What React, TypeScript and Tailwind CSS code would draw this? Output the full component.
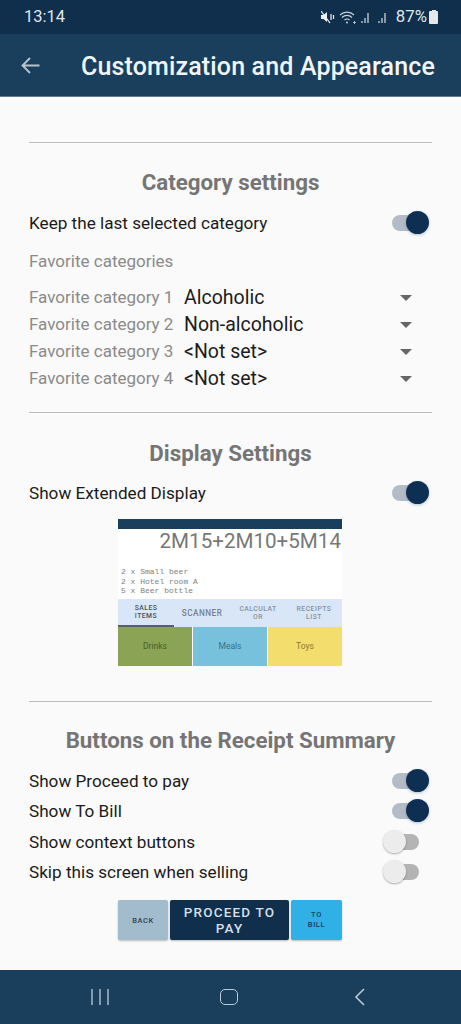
const favorites = [
  { label: 'Favorite category 1', value: 'Alcoholic' },
  { label: 'Favorite category 2', value: 'Non-alcoholic' },
  { label: 'Favorite category 3', value: '<Not set>' },
  { label: 'Favorite category 4', value: '<Not set>' },
];

function Toggle({ on }: { on: boolean }) {
  if (on) {
    return (
      <div className="relative h-[16px] w-[36px]">
        <div className="absolute left-0 top-0 h-[16px] w-[30px] rounded-full bg-[#b3bcc6]" />
        <div className="absolute right-[-1px] top-[-4px] h-[23px] w-[23px] rounded-full bg-[#0f2f52] shadow-[0_1px_3px_rgba(60,110,160,0.4)]" />
      </div>
    );
  }
  return (
    <div className="relative h-[16px] w-[36px]">
      <div className="absolute left-0 top-0 h-[16px] w-[27px] rounded-full bg-[#b4b4b4]" />
      <div className="absolute left-[-9px] top-[-4px] h-[23px] w-[23px] rounded-full bg-[#ececec] shadow-[0_1px_2px_rgba(0,0,0,0.3)]" />
    </div>
  );
}

function SectionTitle({ children }: { children: string }) {
  return <h2 className="text-center text-[22.3px] font-bold leading-[28px] text-[#757575]">{children}</h2>;
}

function ToggleRow({ label, on, className }: { label: string; on: boolean; className?: string }) {
  return (
    <div className={`flex items-center justify-between pr-[4px] ${className ?? ''}`}>
      <span className="text-[17.15px] leading-[22px] text-[#1a1a1a]">{label}</span>
      <Toggle on={on} />
    </div>
  );
}

function DisplayPreview() {
  return (
    <div className="ml-[89px] mt-[15px] w-[224px] overflow-hidden bg-white">
      <div className="h-[10px] bg-[#1a3f5c]" />
      <div className="pr-[1px] text-right text-[20.6px] leading-[24px] text-[#777777]">2M15+2M10+5M14</div>
      <div className="mt-[14px] pl-[3px] font-['Liberation_Mono'] text-[8px] leading-[9.6px] text-[#808080]">
        <div>2 x Small beer</div>
        <div>2 x Hotel room A</div>
        <div>5 x Beer bottle</div>
      </div>
      <div className="mt-[3px] grid h-[28px] grid-cols-4 bg-[#d9e6f7] text-center text-[6.8px] font-medium leading-[8px] tracking-[0.5px]">
        <div className="flex items-center justify-center border-b-2 border-[#555f66] text-[#465260]">SALES<br />ITEMS</div>
        <div className="flex items-center justify-center text-[8.2px] text-[#76828d]">SCANNER</div>
        <div className="flex items-center justify-center text-[#87929d]">CALCULAT<br />OR</div>
        <div className="flex items-center justify-center text-[#87929d]">RECEIPTS<br />LIST</div>
      </div>
      <div className="grid h-[39px] grid-cols-3 gap-[1px] text-center text-[8.5px] leading-[39px]">
        <div className="border-b-2 border-[#c5d0aa] bg-[#8aa355] text-[#46602a]">Drinks</div>
        <div className="border-b-2 border-[#a9c7e8] bg-[#78c1dd] text-[#357089]">Meals</div>
        <div className="border-b-2 border-[#e8c9a0] bg-[#f3dd6c] text-[#8a7b34]">Toys</div>
      </div>
    </div>
  );
}

function ReceiptButtons() {
  return (
    <div className="ml-[89px] mt-[17px] flex h-[40px] w-[224px] gap-[2px] font-medium">
      <div className="flex w-[50px] items-center justify-center rounded-[2px] bg-[#a3bccd] text-[7.5px] tracking-[0.6px] text-[#33424f] shadow-[0_1px_2px_rgba(0,0,0,0.25)]">
        BACK
      </div>
      <div className="flex flex-1 items-center justify-center rounded-[2px] bg-[#0f2f4d] text-center text-[13.5px] leading-[16px] tracking-[1.2px] text-[#d8dfe5] shadow-[0_1px_2px_rgba(0,0,0,0.25)]">
        PROCEED TO<br />PAY
      </div>
      <div className="flex w-[51px] items-center justify-center rounded-[2px] bg-[#2fb0e6] text-center text-[7.5px] leading-[10px] tracking-[0.6px] text-[#123f5c] shadow-[0_1px_2px_rgba(0,0,0,0.25)]">
        TO<br />BILL
      </div>
    </div>
  );
}

function StatusIcons() {
  return (
    <svg width="72" height="16" viewBox="0 0 72 16" fill="none" aria-hidden="true">
      {/* muted speaker */}
      <path d="M0 6h2.500L6 3v10L2.500 10H0Z" fill="#eef2f5" />
      <path d="M0 2l9 12" stroke="#eef2f5" strokeWidth="1.200" />
      <path d="M10 5v6M12.500 6v4" stroke="#eef2f5" strokeWidth="1.200" />
      {/* wifi */}
      <path d="M19 6a10 10 0 0 1 14 0M21 8.500a7 7 0 0 1 10 0M23.500 11a3.500 3.500 0 0 1 5 0" stroke="#c9d3db" strokeWidth="1.100" />
      <circle cx="26" cy="13.500" r="1" fill="#c9d3db" />
      <path d="M32 13.500h3M33.500 12v3" stroke="#c9d3db" strokeWidth="0.800" />
      {/* signal bars */}
      <path d="M41 14v-2M44 14V9M47 14V4" stroke="#c9d3db" strokeWidth="1.300" />
      <path d="M58 14v-2M61 14V9M64 14V4" stroke="#c9d3db" strokeWidth="1.300" />
    </svg>
  );
}

export default function App() {
  return (
    <div className="flex h-[1024px] w-[461px] flex-col overflow-hidden bg-[#fafafa] font-['Roboto',sans-serif]">
      <div className="flex h-[34px] shrink-0 items-center justify-between bg-[#102f4c] pl-[24px] pr-[23px] text-[#dfe6eb]">
        <span className="text-[16.5px]">13:14</span>
        <div className="flex items-center">
          <StatusIcons />
          <span className="ml-[3px] text-[16.8px]">87%</span>
          <div className="relative ml-[2px] h-[13px] w-[9px] rounded-[1px] bg-[#e4e8ec]">
            <div className="absolute left-[2.500px] top-[-1px] h-[1px] w-[4px] bg-[#e4e8ec]" />
          </div>
        </div>
      </div>

      <div className="flex h-[63px] shrink-0 items-center border-b border-[#5d7d92] bg-[#1a3f5c] pl-[21px]">
        <svg width="19" height="17" viewBox="0 0 19 17" fill="none" stroke="#b9c6d0" strokeWidth="1.800" aria-hidden="true">
          <path d="M18.500 8.500H1.500M9 1 1.500 8.500 9 16" />
        </svg>
        <h1 className="ml-[41px] pt-[3px] text-[25px] font-medium tracking-[0.15px] text-[#f1f5f8]">Customization and Appearance</h1>
      </div>

      <main className="flex-1 px-[29px] pt-[45px]">
        <hr className="border-[#bdbdbd]" />
        <div className="mt-[25px]"><SectionTitle>Category settings</SectionTitle></div>
        <ToggleRow className="mt-[16px]" label="Keep the last selected category" on />
        <p className="mt-[16px] text-[17px] leading-[22px] text-[#8a8a8a]">Favorite categories</p>
        <div className="mt-[12px] flex flex-col">
          {favorites.map((f) => (
            <div key={f.label} className="flex h-[27px] items-center">
              <span className="w-[155px] text-[17px] text-[#8a8a8a]">{f.label}</span>
              <span className="flex-1 text-[19.5px] text-[#1c1c1c]">{f.value}</span>
              <div className="mr-[20px] h-0 w-0 border-x-[6px] border-t-[6px] border-x-transparent border-t-[#666666]" />
            </div>
          ))}
        </div>

        <hr className="mt-[20px] border-[#bdbdbd]" />
        <div className="mt-[26px]"><SectionTitle>Display Settings</SectionTitle></div>
        <ToggleRow className="mt-[15px]" label="Show Extended Display" on />
        <DisplayPreview />

        <hr className="mt-[35px] border-[#bdbdbd]" />
        <div className="mt-[24px]"><SectionTitle>Buttons on the Receipt Summary</SectionTitle></div>
        <div className="mt-[16px] flex flex-col gap-[8.500px]">
          <ToggleRow label="Show Proceed to pay" on />
          <ToggleRow label="Show To Bill" on />
          <ToggleRow label="Show context buttons" on={false} />
          <ToggleRow label="Skip this screen when selling" on={false} />
        </div>
        <ReceiptButtons />
      </main>

      <nav className="flex h-[54px] shrink-0 items-center justify-between bg-[#1a3f5c] pl-[91px] pr-[96px]">
        <svg width="18" height="16" viewBox="0 0 18 16" stroke="#a9bac7" strokeWidth="1.500" aria-hidden="true">
          <path d="M1 0v16M9 0v16M17 0v16" />
        </svg>
        <div className="-ml-[6px] h-[16px] w-[18px] rounded-[5px] border-[1.5px] border-[#b9cad6]" />
        <svg width="11" height="18" viewBox="0 0 11 18" fill="none" stroke="#b9cad6" strokeWidth="1.600" aria-hidden="true">
          <path d="M10 1 2 9l8 8" />
        </svg>
      </nav>
    </div>
  );
}
